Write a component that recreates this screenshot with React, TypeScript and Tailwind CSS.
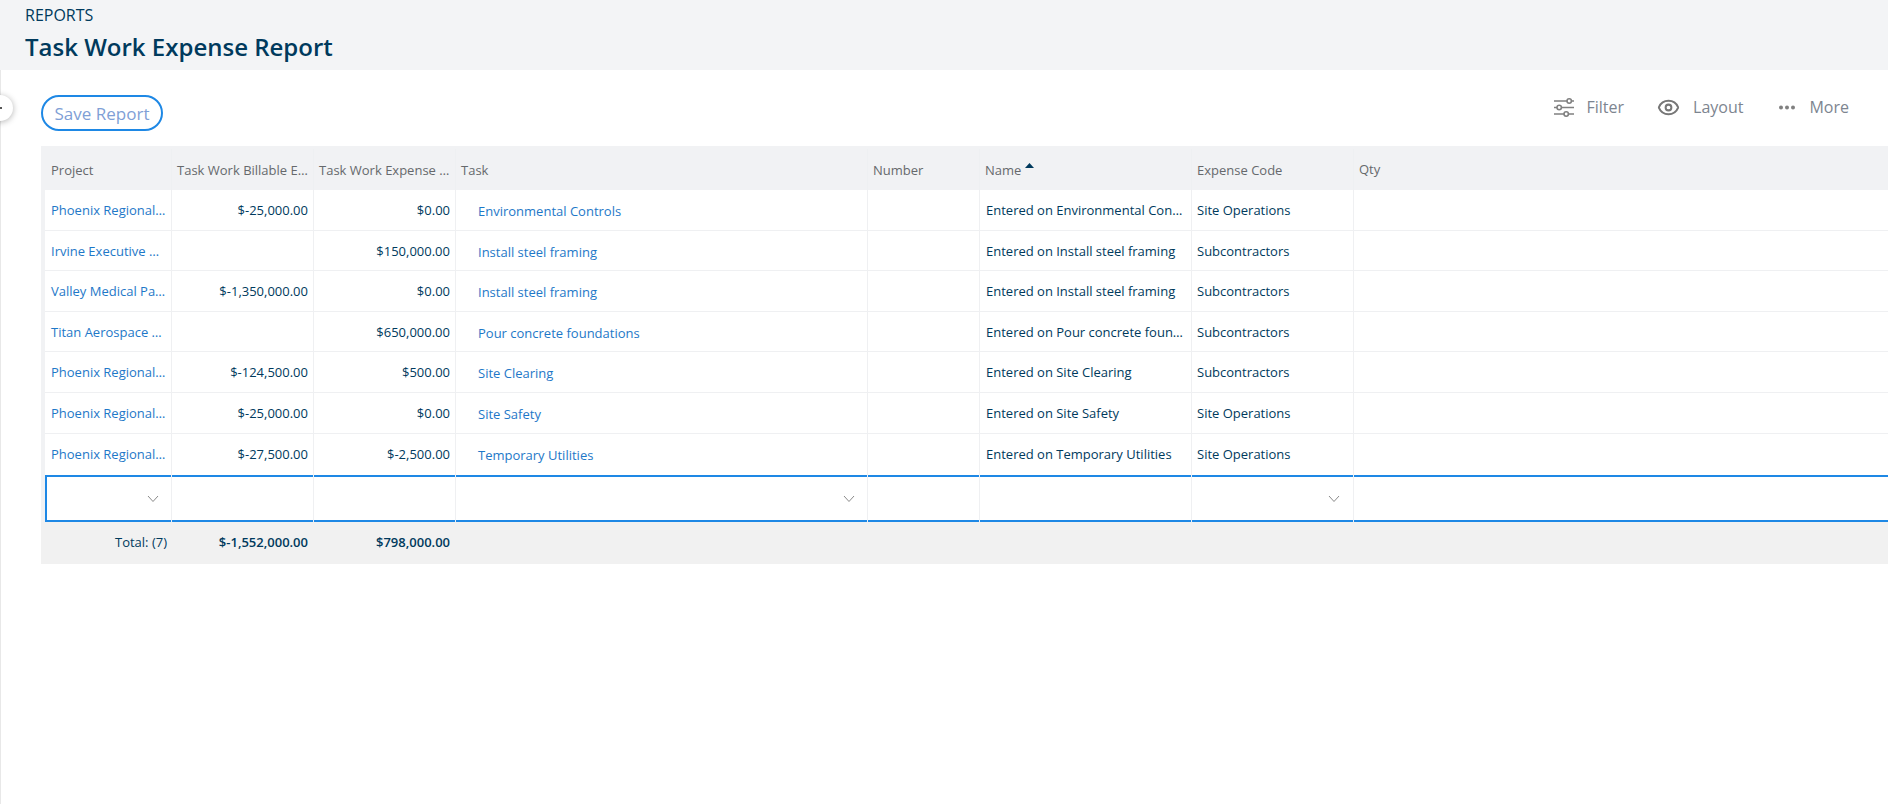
import { Eye } from 'lucide-react';

const rows = [
  ['Phoenix Regional…', '$-25,000.00', '$0.00', 'Environmental Controls', 'Entered on Environmental Con…', 'Site Operations'],
  ['Irvine Executive …', '', '$150,000.00', 'Install steel framing', 'Entered on Install steel framing', 'Subcontractors'],
  ['Valley Medical Pa…', '$-1,350,000.00', '$0.00', 'Install steel framing', 'Entered on Install steel framing', 'Subcontractors'],
  ['Titan Aerospace …', '', '$650,000.00', 'Pour concrete foundations', 'Entered on Pour concrete foun…', 'Subcontractors'],
  ['Phoenix Regional…', '$-124,500.00', '$500.00', 'Site Clearing', 'Entered on Site Clearing', 'Subcontractors'],
  ['Phoenix Regional…', '$-25,000.00', '$0.00', 'Site Safety', 'Entered on Site Safety', 'Site Operations'],
  ['Phoenix Regional…', '$-27,500.00', '$-2,500.00', 'Temporary Utilities', 'Entered on Temporary Utilities', 'Site Operations'],
];

function Chevron() {
  return (
    <svg width="12" height="8" viewBox="0 0 12 8" fill="none" stroke="#8a8a8a" strokeWidth="1">
      <path d="M1 1l5 5.5L11 1" />
    </svg>
  );
}

function FilterIcon() {
  return (
    <svg width="20" height="19" viewBox="0 0 20 19" fill="none" stroke="#808080" strokeWidth="1.6">
      <path d="M0 3h13M17.4 3H20M0 9.5h3M7.4 9.5H20M0 16h10M14.4 16H20" />
      <circle cx="15.2" cy="3" r="2.2" />
      <circle cx="5.2" cy="9.5" r="2.2" />
      <circle cx="12.2" cy="16" r="2.2" />
    </svg>
  );
}

function Dots() {
  return (
    <svg width="16" height="5" viewBox="0 0 16 5" fill="#808080">
      <circle cx="2" cy="2.5" r="2" />
      <circle cx="8" cy="2.5" r="2" />
      <circle cx="14" cy="2.5" r="2" />
    </svg>
  );
}

export default function App() {
  return (
    <div className="relative h-[804px] w-[1888px] overflow-hidden bg-white font-['Open_Sans',sans-serif] text-[13px] text-[#003a5d]">
      {/* Header */}
      <header className="h-[70px] bg-[#f3f4f6] pl-[25px] pt-[4px]">
        <div className="text-[16px] leading-[22px] text-[#003a5d]">REPORTS</div>
        <h1 className="mt-[6px] text-[24px] font-semibold leading-[30px] text-[#003a5d]">Task Work Expense Report</h1>
      </header>

      <div className="absolute left-0 top-[70px] bottom-0 w-px bg-[#e8e8e8]" />
      <div className="absolute left-[-13px] top-[95px] flex h-[26px] w-[26px] items-center justify-center rounded-full bg-white shadow-[0_1px_6px_rgba(0,0,0,0.3)]">
        <span className="ml-[2px] h-[2px] w-[2px] bg-[#555]" />
      </div>

      {/* Toolbar */}
      <div className="flex h-[76px] items-start pl-[41px] pr-[39px] pt-[25px]">
        <button className="h-[36px] w-[122px] rounded-[18px] border-2 border-[#1e88e5] pt-[1px] text-[17px] text-[#7f9fd6]">Save Report</button>
        <div className="ml-auto -mt-px flex h-[26px] items-center text-[16px] text-[#7d8590]">
          <FilterIcon />
          <span className="ml-[12px]">Filter</span>
          <span className="ml-[33px] flex"><Eye size={23} color="#777777" strokeWidth={2.1} /></span>
          <span className="ml-[13px]">Layout</span>
          <span className="ml-[36px] flex"><Dots /></span>
          <span className="ml-[14px]">More</span>
        </div>
      </div>

      {/* Table */}
      <div className="ml-[41px] bg-[#f1f2f4] pl-[4px] pt-[3px]">
        <div className="flex h-[41px] items-center text-[#66696c]">
          <div className="w-[127px] self-stretch border-r border-[#eef0f2] pl-[6px] leading-[43px]">Project</div>
          <div className="w-[142px] self-stretch border-r border-[#eef0f2] pl-[5px] leading-[43px]">Task Work Billable E…</div>
          <div className="w-[142px] self-stretch border-r border-[#eef0f2] pl-[5px] leading-[43px]">Task Work Expense …</div>
          <div className="w-[412px] self-stretch border-r border-[#eef0f2] pl-[5px] leading-[43px]">Task</div>
          <div className="w-[112px] self-stretch border-r border-[#eef0f2] pl-[5px] leading-[43px]">Number</div>
          <div className="flex w-[212px] self-stretch border-r border-[#eef0f2] pl-[5px] leading-[43px]">
            Name
            <svg className="ml-[4px] mt-[14px]" width="9" height="5" viewBox="0 0 9 5" fill="#003a5d"><path d="M0 5l4.5-5L9 5z" /></svg>
          </div>
          <div className="w-[162px] self-stretch border-r border-[#eef0f2] pl-[5px] leading-[43px]">Expense Code</div>
          <div className="flex-1 pl-[5px] leading-[43px]">Qty</div>
        </div>

        <div className="bg-white">
          {rows.map((r, i) => (
            <div key={i} className={`flex ${i === 6 ? 'h-[41.5px]' : 'h-[40.6px] border-b border-[#eff0f2]'} items-center`}>
              <div className="w-[127px] self-stretch truncate border-r border-[#eff0f2] pl-[6px] leading-[41px] text-[#1e78c8]">{r[0]}</div>
              <div className="w-[142px] self-stretch border-r border-[#eff0f2] pr-[5px] text-right leading-[41px]">{r[1]}</div>
              <div className="w-[142px] self-stretch border-r border-[#eff0f2] pr-[5px] text-right leading-[41px]">{r[2]}</div>
              <div className="w-[412px] self-stretch border-r border-[#eff0f2] pl-[22px] pt-[1px] leading-[41px] text-[#1e78c8]">{r[3]}</div>
              <div className="w-[112px] self-stretch border-r border-[#eff0f2]" />
              <div className="w-[212px] self-stretch truncate border-r border-[#eff0f2] pl-[6px] leading-[41px]">{r[4]}</div>
              <div className="w-[162px] self-stretch border-r border-[#eff0f2] pl-[5px] leading-[41px]">{r[5]}</div>
              <div className="flex-1" />
            </div>
          ))}

          {/* New row */}
          <div className="flex h-[47px] border-y-2 border-l-2 border-[#1e88e5]">
            <div className="-my-[2px] flex w-[125px] items-center justify-end border-r border-[#eff0f2] pr-[12px]"><Chevron /></div>
            <div className="-my-[2px] w-[142px] border-r border-[#eff0f2]" />
            <div className="-my-[2px] w-[142px] border-r border-[#eff0f2]" />
            <div className="-my-[2px] flex w-[412px] items-center justify-end border-r border-[#eff0f2] pr-[12px]"><Chevron /></div>
            <div className="-my-[2px] w-[112px] border-r border-[#eff0f2]" />
            <div className="-my-[2px] w-[212px] border-r border-[#eff0f2]" />
            <div className="-my-[2px] flex w-[162px] items-center justify-end border-r border-[#eff0f2] pr-[13px]"><Chevron /></div>
            <div className="flex-1" />
          </div>
        </div>

        {/* Totals */}
        <div className="-ml-[4px] flex h-[42px] bg-[#f1f1f1] leading-[40px]">
          <div className="w-[131px] pr-[5px] text-right">Total: (7)</div>
          <div className="w-[142px] pr-[6px] text-right font-semibold">$-1,552,000.00</div>
          <div className="w-[142px] pr-[6px] text-right font-semibold">$798,000.00</div>
        </div>
      </div>
    </div>
  );
}
